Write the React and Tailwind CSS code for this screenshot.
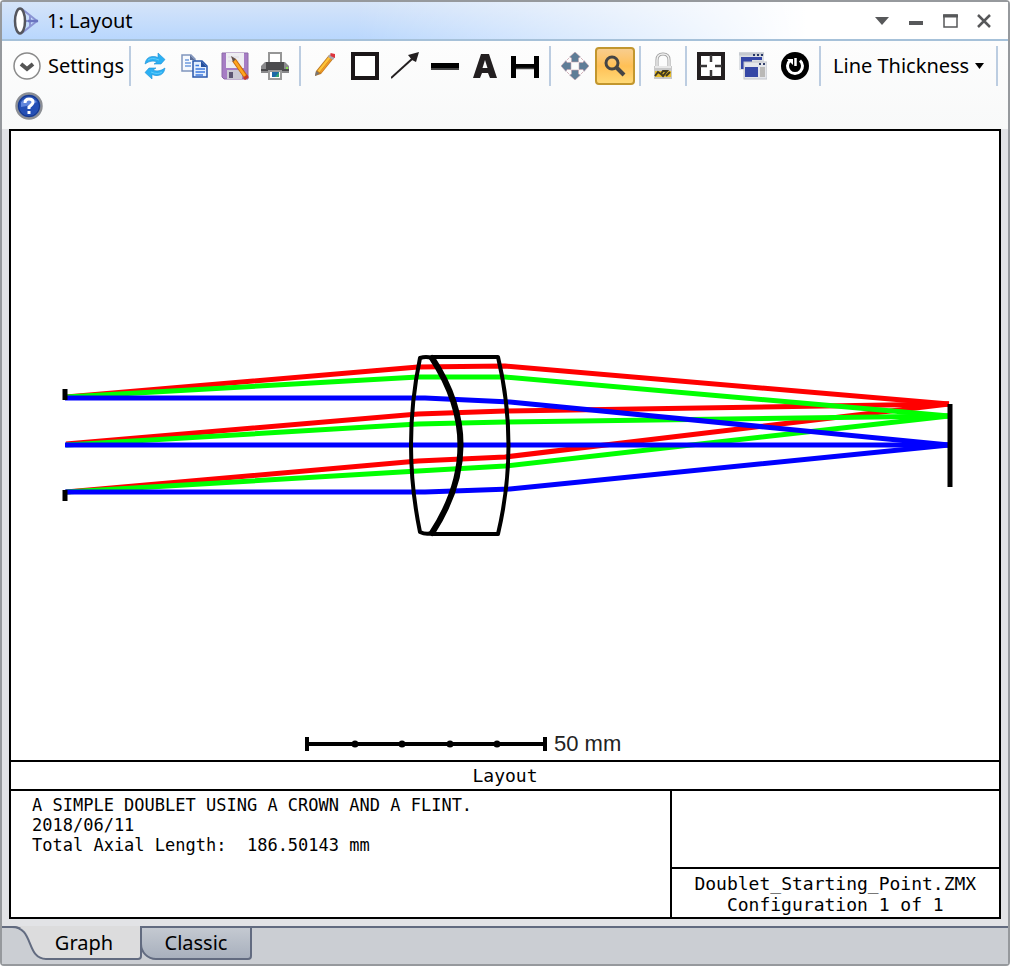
import { useState } from 'react'

const rays = [
  { color: '#ff0000', points: '66,397 418,367 505,366 949,404' },
  { color: '#ff0000', points: '66,444 418,414 505,411 949,404' },
  { color: '#ff0000', points: '66,492 418,461 505,457 949,404' },
  { color: '#00ff00', points: '66,397 418,377 505,377 949,416' },
  { color: '#00ff00', points: '66,445 418,424 505,422 949,416' },
  { color: '#00ff00', points: '66,492 418,471 505,466 949,416' },
  { color: '#0000ff', points: '65,398 425,398 510,402 949,445' },
  { color: '#0000ff', points: '65,445 949,445' },
  { color: '#0000ff', points: '65,492 425,492 510,489 949,445' },
]

function Icon({ children }) {
  return (
    <svg width="28" height="28" viewBox="0 0 28 28" fill="none" aria-hidden="true">
      {children}
    </svg>
  )
}

function RefreshIcon() {
  return (
    <Icon>
      <path d="M4 12 Q5 5 11 4.5 Q14 4 17 5.5 V1 L24 7.5 L20 12 H13 L16 10 Q10 7.5 4 12 Z" fill="#2bb0f3" stroke="#1b8fd6" strokeWidth="0.6" />
      <path d="M24 16 Q23 23 17 23.5 Q14 24 11 22.5 V27 L4 20.5 L8 16 H15 L12 18 Q18 20.5 24 16 Z" fill="#2bb0f3" stroke="#1b8fd6" strokeWidth="0.6" />
      <path d="M7 8 Q11 5 18 8 M21 20 Q17 23 10 20" stroke="#5fcbfb" />
    </Icon>
  )
}

function CopyIcon() {
  return (
    <Icon>
      <path d="M1 3 H10 L14 7 V19 H1 Z" fill="#f6f9fe" stroke="#8095bd" strokeWidth="1.5" />
      <path d="M9 3 L14 8 H9 Z" fill="#5c6f99" />
      <path d="M4 8 H8 M4 11 H10 M4 14 H10" stroke="#6f9ade" strokeWidth="1.5" />
      <path d="M12 9 H21 L26 14 V25 H12 Z" fill="#e4effd" stroke="#2857ac" strokeWidth="1.5" />
      <path d="M20 9 L26 15 H20 Z" fill="#244f9e" />
      <path d="M14.5 13.5 H18 M14.5 17 H24 M14.5 20 H24 M14.5 23 H22" stroke="#3d7ade" strokeWidth="1.5" />
    </Icon>
  )
}

function SaveIcon() {
  return (
    <Icon>
      <path d="M1 1 H27 V27 H3 L1 25 Z" fill="#a67cc4" stroke="#8c6aa8" />
      <rect x="5" y="1" width="18" height="15" fill="#eeedf2" />
      <path d="M7 5 H18 M7 9 H18" stroke="#dcdae2" />
      <rect x="6" y="18" width="15" height="9" fill="#cbc9d4" />
      <rect x="8" y="20" width="4" height="6" fill="#5d5673" />
      <path d="M13 8 L25 25" stroke="#c9690c" strokeWidth="4.5" />
      <path d="M13 8 L24 24" stroke="#ffa51f" strokeWidth="2.5" />
      <path d="M10 4 L15 7 L12 10 Z" fill="#64514b" />
      <path d="M23 27 L27 24" stroke="#c93a2b" strokeWidth="3" />
    </Icon>
  )
}

function PrintIcon() {
  return (
    <Icon>
      <path d="M8 11 V1 H20 V11" fill="#fff" stroke="#969696" strokeWidth="2" />
      <path d="M4 10 H24 L28 14 V21 H0 V14 Z" fill="#8a8a8c" />
      <path d="M5 10 H23 V17 H5 Z" fill="#4c4c4e" />
      <path d="M0 18 H28" stroke="#4a4a4c" strokeWidth="2" />
      <path d="M8 19 H20 V27 H8 Z" fill="#fff" stroke="#9b9b9b" strokeWidth="2" />
      <rect x="11" y="20" width="7" height="5" fill="#1d69a8" />
      <path d="M14 25 L18 20 V25 Z" fill="#32a374" />
      <rect x="25" y="15" width="2" height="2" fill="#83e24b" />
    </Icon>
  )
}

function PencilIcon() {
  return (
    <Icon>
      <path d="M5 19 L18 3 L23 6 L10 22 L4 24 Z" fill="#bd7824" />
      <path d="M7.5 19.5 L19 5" stroke="#ffc437" strokeWidth="2.5" />
      <path d="M9.5 20.5 L21 6" stroke="#f09a24" strokeWidth="1.5" />
      <path d="M19 2 L24 5 L22 8 L17 5 Z" fill="#a9a9b1" />
      <path d="M19.5 1 L24 2 V6 L19.5 4 Z" fill="#de343c" />
      <path d="M5 19 L8.5 21.5 L4 24 Z" fill="#777" />
    </Icon>
  )
}

function MoveIcon() {
  return (
    <Icon>
      <g fill="#5f7d97" stroke="#c9a3ad" strokeWidth="0.6">
        <path id="pan-arrow" d="M14 0 L19.5 5 L17.5 6 V10 H10.5 V6 L8.5 5 Z" />
        <use href="#pan-arrow" transform="rotate(90 14 14)" />
        <use href="#pan-arrow" transform="rotate(180 14 14)" />
        <use href="#pan-arrow" transform="rotate(270 14 14)" />
      </g>
      <path d="M6 8 L8 6 M20 6 L22 8 M6 20 L8 22 M22 20 L20 22" stroke="#d5b5bd" />
    </Icon>
  )
}

function LockIcon() {
  return (
    <Icon>
      <path d="M8 15 V8 Q8 2 14 2 Q20 2 20 8 V15" stroke="#9a9a9a" strokeWidth="3" />
      <path d="M8 15 V8 Q8 2 14 2 Q20 2 20 8 V15" stroke="#efefef" strokeWidth="1.5" />
      <path d="M5 14 H23 V27 H5 Z" fill="#c8c8c8" />
      <path d="M6 15 H22" stroke="#e8e8e8" strokeWidth="2" />
      <rect x="6" y="19" width="16" height="6" fill="#e7bd2a" />
      <path d="M6 24 L9 20 L12 22 L14 19 L18 19 L14 24 L12 22 M17 24 L21 20" stroke="#433b20" strokeWidth="2" />
    </Icon>
  )
}

function WindowsIcon() {
  return (
    <Icon>
      <rect x="0" y="0" width="25" height="18" fill="#dcdfe3" />
      <path d="M0 2 H25" stroke="#c5c9cf" strokeWidth="3" />
      <path d="M14 3 H16 M18 3 H20 M22 3 H24" stroke="#273765" strokeWidth="2" />
      <path d="M2 5 H23 V8 H13 V17 H2 Z" fill="#3547a6" />
      <rect x="5" y="10" width="23" height="17" fill="#e4e6eb" stroke="#c1c4ca" />
      <path d="M20 12 H22 M24 12 H26" stroke="#33416b" strokeWidth="2" />
      <rect x="6" y="15" width="13" height="10" fill="#3547a6" />
      <rect x="21" y="15" width="5" height="10" fill="#bab9b7" />
    </Icon>
  )
}

function ToolButton({ label, className = 'w-10', children }) {
  return (
    <button
      type="button"
      aria-label={label}
      title={label}
      className={`${className} flex h-10 items-center justify-center`}
    >
      {children}
    </button>
  )
}

function Separator() {
  return <div className="mx-1 h-10 w-0.5 bg-[#bccde1]" />
}

function TitleBar() {
  return (
    <header className="border-b-2 border-[#a6c1d9] bg-linear-to-b from-[#d5e4f9] to-[#b9d7fd]">
      <div className="flex h-[37px] items-center bg-linear-to-r from-white/0 from-35% to-white to-80% pr-[7px] pl-[11px]">
        <svg width="26" height="30" viewBox="0 0 26 30" fill="none" aria-hidden="true">
          <path d="M9 3 L24 15 L9 27 M7 15 H24 M17 10 V20" stroke="#8a93d3" strokeWidth="2" />
          <path d="M15 15 H25" stroke="#6a74c0" strokeWidth="2.5" />
          <ellipse cx="7" cy="15" rx="5" ry="12.5" fill="#fff" stroke="#55565e" strokeWidth="2.5" />
        </svg>
        <h1 className="ml-2 flex-1 text-[20px] leading-7">1: Layout</h1>
        <button type="button" aria-label="Window menu" className="flex h-8 w-[34px] items-center justify-center">
          <svg width="14" height="8" viewBox="0 0 14 8"><path d="M0 0 H14 L7 8 Z" fill="#57585a" /></svg>
        </button>
        <button type="button" aria-label="Minimize" className="flex h-8 w-[34px] items-center justify-center">
          <svg width="14" height="14" viewBox="0 0 14 14"><path d="M0 9 H14" stroke="#57585a" strokeWidth="4" /></svg>
        </button>
        <button type="button" aria-label="Maximize" className="flex h-8 w-[34px] items-center justify-center">
          <svg width="15" height="14" viewBox="0 0 15 14" fill="none">
            <path d="M1 1 H14 V13 H1 Z" stroke="#57585a" strokeWidth="1.5" />
            <path d="M0 2 H15" stroke="#57585a" strokeWidth="3" />
          </svg>
        </button>
        <button type="button" aria-label="Close" className="flex h-8 w-[34px] items-center justify-center">
          <svg width="14" height="14" viewBox="0 0 14 14"><path d="M1 1 L13 13 M13 1 L1 13" stroke="#57585a" strokeWidth="2.5" /></svg>
        </button>
      </div>
    </header>
  )
}

function Toolbar() {
  return (
    <div className="flex flex-wrap items-center bg-linear-to-b from-[#fdfdfd] to-[#f8f9f9] pt-[5px] pb-[3px] pl-[7px]">
      <button type="button" className="flex h-10 w-[116px] items-center gap-[7px] px-1 text-[20px]">
        <svg className="shrink-0" width="28" height="28" viewBox="0 0 28 28" fill="none" aria-hidden="true">
          <circle cx="14" cy="14" r="13" fill="#fff" stroke="#8b8b8b" strokeWidth="1.5" />
          <path d="M8 12 L14 17 L20 12" stroke="#555" strokeWidth="4" />
        </svg>
        Settings
      </button>
      <Separator />
      <ToolButton label="Refresh"><RefreshIcon /></ToolButton>
      <ToolButton label="Copy"><CopyIcon /></ToolButton>
      <ToolButton label="Save"><SaveIcon /></ToolButton>
      <ToolButton label="Print"><PrintIcon /></ToolButton>
      <Separator />
      <ToolButton label="Draw"><PencilIcon /></ToolButton>
      <ToolButton label="Rectangle">
        <Icon><rect x="2" y="2" width="24" height="24" fill="#fff" stroke="#1c1719" strokeWidth="4" /></Icon>
      </ToolButton>
      <ToolButton label="Arrow">
        <Icon>
          <path d="M0 26 L21 7" stroke="#231f20" strokeWidth="2" />
          <path d="M28 0 L25 10 L21 8 L17 3 Z" fill="#231f20" />
        </Icon>
      </ToolButton>
      <ToolButton label="Line">
        <Icon>
          <path d="M0 11 H28 V16 H0 Z" fill="#000" />
          <path d="M0 17 H28" stroke="#454545" strokeWidth="2" />
        </Icon>
      </ToolButton>
      <ToolButton label="Text">
        <Icon><path fillRule="evenodd" d="M10 2 H18 L26 26 H19 L17 21 H11 L9 26 H2 Z M14 8 L11.5 16 H16.5 Z" fill="#231f20" /></Icon>
      </ToolButton>
      <ToolButton label="Dimension">
        <Icon>
          <path d="M0 4 H5 V26 H0 Z M23 4 H28 V26 H23 Z" fill="#000" />
          <path d="M4 14 H24" stroke="#000" strokeWidth="4" />
          <path d="M5 16.5 H23" stroke="#444" strokeWidth="1.5" />
        </Icon>
      </ToolButton>
      <Separator />
      <ToolButton label="Pan"><MoveIcon /></ToolButton>
      <button
        type="button"
        aria-label="Zoom"
        aria-pressed="true"
        className="flex h-[38px] w-10 items-center justify-center rounded border-2 border-[#c2962e] bg-linear-to-b from-[#f8cd8d] via-[#ffc055] to-[#ffd977]"
      >
        <svg width="22" height="22" viewBox="0 0 22 22" fill="none" aria-hidden="true">
          <circle cx="8" cy="8" r="6" stroke="#454545" strokeWidth="3" />
          <path d="M12 12 L20 20" stroke="#454545" strokeWidth="4" />
        </svg>
      </button>
      <Separator />
      <ToolButton label="Lock" className="w-9"><LockIcon /></ToolButton>
      <Separator />
      <ToolButton label="Fit to window">
        <Icon>
          <rect x="2" y="2" width="24" height="24" fill="#fff" stroke="#231f20" strokeWidth="4" />
          <path d="M14 3 V10 M14 18 V25 M3 14 H10 M18 14 H25" stroke="#3a3839" strokeWidth="2.5" />
        </Icon>
      </ToolButton>
      <ToolButton label="Clone window" className="w-11"><WindowsIcon /></ToolButton>
      <ToolButton label="Reset">
        <Icon>
          <circle cx="14" cy="14" r="14" fill="#000" />
          <path d="M9 8.5 A7.5 7.5 0 1 0 19 8.5" stroke="#fff" strokeWidth="3" />
          <path d="M6 7 H12 V13 Z" fill="#fff" />
          <path d="M14.5 6 V14" stroke="#fff" strokeWidth="2.5" />
        </Icon>
      </ToolButton>
      <Separator />
      <button type="button" className="flex h-10 items-center gap-1.5 px-2 text-[20px]">
        Line Thickness
        <svg width="9" height="6" viewBox="0 0 9 6" aria-hidden="true"><path d="M0 0 H9 L4.5 6 Z" fill="#000" /></svg>
      </button>
      <Separator />
      <ToolButton label="Help">
        <Icon>
          <circle cx="14" cy="14" r="12.5" fill="#244fb5" stroke="#8b8e94" strokeWidth="2.5" />
          <circle cx="14" cy="14" r="10.5" stroke="#173682" />
          <path d="M6 10 Q14 2 22 10 Q15 14 6 15 Z" fill="#6287dc" />
          <path d="M10 11 Q10 7 14 7 Q18 7 18 10 Q18 12 14 15 V17" stroke="#fff" strokeWidth="3" />
          <path d="M14 19 V22" stroke="#fff" strokeWidth="3" />
        </Icon>
      </ToolButton>
    </div>
  )
}

function LensDrawing() {
  return (
    <svg viewBox="11 131 988 629" className="block w-full" fill="none" role="img" aria-label="Lens layout">
      {rays.map((ray) => (
        <polyline key={ray.points} points={ray.points} stroke={ray.color} strokeWidth="5" />
      ))}
      <g stroke="#000" strokeLinejoin="round">
        <path d="M432 358 Q426 356 420 358 Q402 445 420 532 Q426 535 432 533" strokeWidth="4" />
        <path d="M432 358 Q489 445 432 533" strokeWidth="6" strokeLinecap="round" />
        <path d="M433 357 H498 Q519 445 498 534 H433" strokeWidth="4" />
        <path d="M65 389 V400 M65 490 V501" strokeWidth="5" />
        <path d="M950 404 V487" strokeWidth="5" />
        <path d="M307 744 H545" strokeWidth="4" />
        <path d="M307 737 V751 M545 737 V751" strokeWidth="4" />
      </g>
      <g fill="#000">
        <circle cx="355" cy="744" r="3.5" />
        <circle cx="402" cy="744" r="3.5" />
        <circle cx="450" cy="744" r="3.5" />
        <circle cx="497" cy="744" r="3.5" />
      </g>
      <text x="554" y="751" fill="#222" fontSize="22" fontFamily="'Liberation Sans', sans-serif">50 mm</text>
    </svg>
  )
}

function Report() {
  return (
    <section className="mx-[7px] flex flex-1 flex-col border-2 border-black bg-white font-['DejaVu_Sans_Mono',monospace]">
      <LensDrawing />
      <h2 className="h-[31px] border-y-2 border-black text-center text-[18px] leading-7">Layout</h2>
      <div className="flex flex-1">
        <div className="w-2/3 px-[21px] pt-1 text-[17px] leading-5">
          <p>A SIMPLE DOUBLET USING A CROWN AND A FLINT.</p>
          <p>2018/06/11</p>
          <p className="whitespace-pre">Total Axial Length:  186.50143 mm</p>
        </div>
        <div className="flex w-1/3 flex-col border-l-2 border-black">
          <div className="flex-1" />
          <div className="border-t-2 border-black pt-1 pb-0.5 text-center text-[18px] leading-[21px]">
            <p>Doublet_Starting_Point.ZMX</p>
            <p>Configuration 1 of 1</p>
          </div>
        </div>
      </div>
    </section>
  )
}

function Tabs() {
  const [active, setActive] = useState('graph')

  return (
    <div role="tablist" className="mt-[7px] flex h-[38px] items-start border-t-2 border-[#626b80] bg-[#cbced3]">
      <button
        type="button"
        role="tab"
        aria-selected={active === 'graph'}
        onClick={() => setActive('graph')}
        className="relative -mt-0.5 h-[34px] w-[140px] pl-6 text-[20px]"
      >
        <svg className="absolute inset-0" width="140" height="34" viewBox="0 0 140 34" fill="none" aria-hidden="true">
          <path d="M12 0 C34 1 24 33 44 33 H139 V0 Z" fill="#dcdcdd" />
          <path d="M0 1 H10 C32 1 24 33 44 33 H136 Q139 33 139 30 V0" stroke="#626b80" strokeWidth="2" />
        </svg>
        <span className="relative">Graph</span>
      </button>
      <button
        type="button"
        role="tab"
        aria-selected={active === 'classic'}
        onClick={() => setActive('classic')}
        className="-mt-0.5 -ml-0.5 h-[34px] w-28 rounded-br rounded-bl-2xl border-2 border-[#626b80] bg-linear-to-b from-[#c4c9d1] to-[#a8b0bd] text-[20px] leading-[30px]"
      >
        Classic
      </button>
    </div>
  )
}

export default function App() {
  return (
    <main className="flex min-h-screen flex-col rounded border-2 border-[#96999d] bg-[#e2e3e6] font-['Noto_Sans','Open_Sans',sans-serif] text-black">
      <TitleBar />
      <Toolbar />
      <Report />
      <Tabs />
    </main>
  )
}
